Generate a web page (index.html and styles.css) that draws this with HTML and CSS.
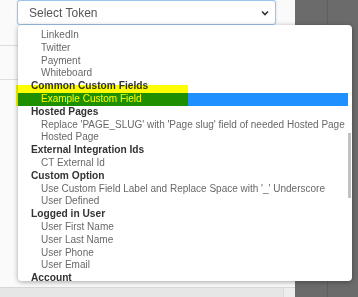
FILE: index.html
```html
<!DOCTYPE html>
<html>
<head>
  <title>Select Token</title>
  <link rel="stylesheet" href="styles.css">
</head>
<body>
  <div class="screen">
    <div class="panel">
      <div class="row row-top">
        <div class="select">
          <span>Select Token</span>
          <svg class="chevron" width="8" height="6" viewBox="0 0 8 6"><path d="M1 1.5 L4 4.5 L7 1.5" fill="none" stroke="#333" stroke-width="1.6"/></svg>
        </div>
      </div>
      <div class="row row-mid"></div>
      <div class="row row-fill"></div>
      <div class="footer">
        <div class="footer-main"></div>
        <div class="footer-side"></div>
      </div>
    </div>
    <div class="backdrop">
      <div class="backdrop-line"></div>
    </div>

    <div class="dropdown">
      <ul class="options">
        <li class="item">LinkedIn</li>
        <li class="item">Twitter</li>
        <li class="item">Payment</li>
        <li class="item">Whiteboard</li>
        <li class="group">Common Custom Fields</li>
        <li class="item selected">Example Custom Field</li>
        <li class="group">Hosted Pages</li>
        <li class="item">Replace 'PAGE_SLUG' with 'Page slug' field of needed Hosted Page</li>
        <li class="item">Hosted Page</li>
        <li class="group">External Integration Ids</li>
        <li class="item">CT External Id</li>
        <li class="group">Custom Option</li>
        <li class="item">Use Custom Field Label and Replace Space with '_' Underscore</li>
        <li class="item">User Defined</li>
        <li class="group">Logged in User</li>
        <li class="item">User First Name</li>
        <li class="item">User Last Name</li>
        <li class="item">User Phone</li>
        <li class="item">User Email</li>
        <li class="group">Account</li>
      </ul>
      <div class="scroll-thumb"></div>
    </div>

    <div class="highlighter"></div>
  </div>
</body>
</html>
```

FILE: styles.css
```css
body {
  margin: 0;
  font-family: 'Liberation Sans', Arial, sans-serif;
  background-color: #6b6b6b;
}
.screen {
  position: relative;
  width: 358px;
  height: 297px;
  overflow: hidden;
  display: grid;
  grid-template-columns: 295px 1fr;
}
.panel {
  background-color: #fafafa;
  display: flex;
  flex-direction: column;
}
.row {
  border-bottom: 1px solid #dedede;
}
.row-top {
  height: 45px;
  padding-left: 17px;
}
.row-mid {
  height: 33px;
}
.row-fill {
  flex: 1;
  border-bottom: 1px solid #d6d6d6;
}
.footer {
  height: 9px;
  display: flex;
}
.footer-main {
  width: 283px;
  background-color: #e6e6e6;
}
.footer-side {
  flex: 1;
  background-color: #ededed;
  border-left: 1px solid #d9d9d9;
}
.select {
  width: 259px;
  height: 25px;
  border: 1px solid #9cc2ee;
  border-radius: 3px;
  background-color: white;
  display: flex;
  align-items: center;
  justify-content: space-between;
  padding: 0 6px 0 11px;
  box-sizing: border-box;
  font-size: 12px;
  color: #555;
  box-shadow: 0 0 2px rgba(102, 160, 230, 0.4);
}
.chevron {
  margin-top: 1px;
}
.backdrop {
  background-color: #6b6b6b;
  padding-left: 32px;
}
.backdrop-line {
  width: 1px;
  height: 100%;
  background-color: #5e5e5e;
}
.dropdown {
  position: absolute;
  left: 18px;
  top: 25px;
  width: 334px;
  height: 256px;
  background-color: white;
  border-radius: 4px;
  overflow: hidden;
  box-shadow: 0 1px 5px rgba(0, 0, 0, 0.35);
}
.options {
  list-style: none;
  margin: 0;
  padding: 4px 4px 0 0;
  font-size: 10px;
}
.options li {
  height: 12.8px;
  line-height: 12.8px;
  white-space: nowrap;
}
.group {
  padding-left: 13px;
  font-weight: 700;
  font-size: 10.2px;
  color: #333;
}
.item {
  padding-left: 23px;
  color: #686868;
}
.item.selected {
  background-color: #1e90ff;
  color: white;
}
.scroll-thumb {
  position: absolute;
  right: 1px;
  top: 108px;
  width: 3px;
  height: 65px;
  background-color: #c1c1c1;
}
.highlighter {
  position: absolute;
  left: 16px;
  top: 85px;
  width: 172px;
  height: 21px;
  background-color: #ffff00;
  mix-blend-mode: multiply;
}
```
